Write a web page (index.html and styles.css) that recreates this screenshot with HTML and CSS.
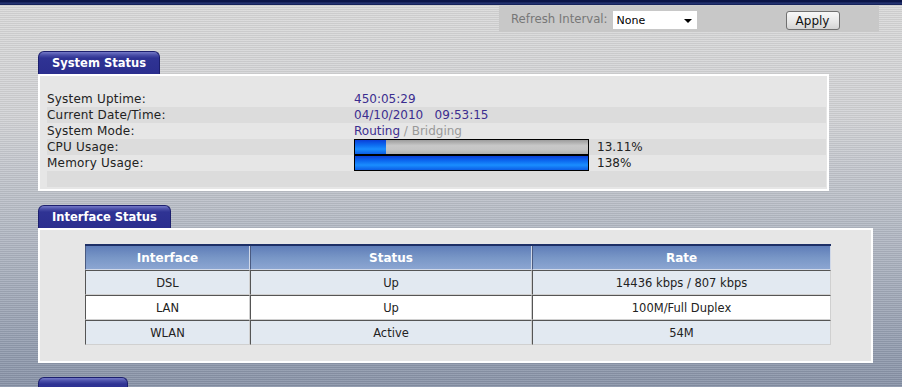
FILE: index.html
```html
<!DOCTYPE html>
<html lang="en">
<head>
    <meta charset="UTF-8">
    <title>Status</title>
    <link rel="stylesheet" href="styles.css">
</head>
<body>
    <div class="topbar"></div>
    <div class="toolbar-row">
        <div class="toolbar">
            <label for="refresh">Refresh Interval:</label>
            <div class="select-wrap">
                <select id="refresh">
                    <option>None</option>
                    <option>5 seconds</option>
                    <option>10 seconds</option>
                </select>
                <span class="arrow"></span>
            </div>
            <button type="button" class="apply">Apply</button>
        </div>
    </div>

    <div class="section">
        <div class="tab">System Status</div>
        <div class="panel system-panel">
            <div class="row">
                <span class="label">System Uptime:</span>
                <span class="value">450:05:29</span>
            </div>
            <div class="row">
                <span class="label">Current Date/Time:</span>
                <span class="value">04/10/2010&nbsp;&nbsp;&nbsp;09:53:15</span>
            </div>
            <div class="row">
                <span class="label">System Mode:</span>
                <span class="value">Routing <span class="muted">/ Bridging</span></span>
            </div>
            <div class="row">
                <span class="label">CPU Usage:</span>
                <span class="bar"><span class="fill" style="width: 13.11%"></span></span>
                <span class="pct">13.11%</span>
            </div>
            <div class="row">
                <span class="label">Memory Usage:</span>
                <span class="bar"><span class="fill" style="width: 100%"></span></span>
                <span class="pct">138%</span>
            </div>
            <div class="row"></div>
        </div>
    </div>

    <div class="section">
        <div class="tab">Interface Status</div>
        <div class="panel iface-panel">
            <table class="iface">
                <thead>
                    <tr>
                        <th class="c1">Interface</th>
                        <th class="c2">Status</th>
                        <th>Rate</th>
                    </tr>
                </thead>
                <tbody>
                    <tr class="alt">
                        <td>DSL</td>
                        <td>Up</td>
                        <td>14436 kbps / 807 kbps</td>
                    </tr>
                    <tr>
                        <td>LAN</td>
                        <td>Up</td>
                        <td>100M/Full Duplex</td>
                    </tr>
                    <tr class="alt">
                        <td>WLAN</td>
                        <td>Active</td>
                        <td>54M</td>
                    </tr>
                </tbody>
            </table>
        </div>
    </div>

    <div class="section">
        <div class="tab tab-short">&nbsp;</div>
    </div>
</body>
</html>
```

FILE: styles.css
```css
body {
    margin: 0;
    height: 387px;
    overflow: hidden;
    font-family: "DejaVu Sans", Verdana, sans-serif;
    font-size: 12px;
    color: #222;
    background:
        repeating-linear-gradient(to bottom, rgba(255,255,255,0.1) 0, rgba(255,255,255,0.1) 1px, rgba(0,0,0,0.06) 1px, rgba(0,0,0,0.06) 2px),
        linear-gradient(to bottom, #dadada 0%, #d2d3d6 30%, #b3b9c4 60%, #8893a8 100%);
}
.topbar {
    height: 5px;
    background: linear-gradient(to bottom, #0b1548 0, #0b1548 2px, #2a3a7a 3px, #0e1a50 5px);
}
.toolbar-row {
    display: flex;
    justify-content: flex-end;
    padding-right: 23px;
    margin-top: 1px;
}
.toolbar {
    width: 380px;
    height: 26px;
    box-sizing: border-box;
    padding: 5px 0 0 12px;
    display: flex;
    align-items: flex-start;
    background: #c8c8c8;
}
.toolbar label {
    color: #777;
    font-size: 11.7px;
    line-height: 17px;
    margin-right: 5px;
}
.select-wrap {
    position: relative;
    width: 84px;
    height: 18px;
}
.select-wrap select {
    appearance: none;
    -webkit-appearance: none;
    width: 84px;
    height: 18px;
    border: none;
    background: #fff;
    font-family: "DejaVu Sans", Verdana, sans-serif;
    font-size: 11px;
    color: #000;
    padding: 0 0 0 4px;
    margin: 0;
}
.select-wrap .arrow {
    position: absolute;
    right: 5px;
    top: 8px;
    border-left: 4px solid transparent;
    border-right: 4px solid transparent;
    border-top: 4px solid #000;
}
.apply {
    margin-left: 89px;
    width: 54px;
    height: 19px;
    padding: 0;
    font-family: "DejaVu Sans", Verdana, sans-serif;
    font-size: 12px;
    color: #111;
    border: 1px solid #707070;
    border-radius: 3px;
    background: linear-gradient(to bottom, #f8f8f8, #e6e6e6 60%, #d4d4d4);
}
.section {
    margin-left: 38px;
}
.section + .section {
    margin-top: 14px;
}
.tab {
    display: inline-block;
    box-sizing: border-box;
    height: 23px;
    padding: 4px 13px 0 13px;
    margin-top: 19px;
    font-weight: bold;
    font-size: 11.5px;
    color: #fff;
    border: 1px solid #1c1f6e;
    border-bottom: none;
    border-radius: 6px 6px 0 0;
    background: linear-gradient(to bottom, #7479c8 0, #4a4fa8 3px, #2f3394 6px, #2b2e8e 100%);
}
.section + .section .tab {
    margin-top: 0;
}
.tab-short {
    width: 90px;
}
.panel {
    border: 2px solid #fff;
    background: #e6e6e6;
}
.system-panel {
    box-sizing: content-box;
    width: 779px;
    padding: 15px 1px 2px 7px;
}
.row {
    display: flex;
    align-items: center;
    height: 16px;
    line-height: 16px;
}
.row:nth-child(even) {
    background: #dcdcdc;
}
.label {
    width: 307px;
    color: #222;
    letter-spacing: 0.2px;
}
.value {
    color: #3b2d8f;
}
.muted {
    color: #999;
}
.bar {
    display: block;
    width: 233px;
    height: 14px;
    border: 1px solid #000;
    background: linear-gradient(to bottom, #9c9c9c, #c8c8c8 40%, #c4c4c4 70%, #b0b0b0);
}
.fill {
    display: block;
    height: 100%;
    background: linear-gradient(to bottom, #0a3fd8 0, #0c6af0 35%, #1a8eff 65%, #0c5ee6 100%);
}
.pct {
    margin-left: 8px;
    color: #222;
}
.iface-panel {
    width: 766px;
    padding: 14px 20px 16px 45px;
}
.iface {
    width: 746px;
    border-collapse: separate;
    border-spacing: 0;
    border-top: 2px solid #1d2f66;
}
.iface th {
    height: 23px;
    padding: 0;
    color: #fff;
    font-weight: bold;
    font-size: 12px;
    background: linear-gradient(to bottom, #5f7db8, #7896c6 50%, #8ca6d2);
    border-left: 1px solid #4a5a80;
    border-right: 1px solid #d0d8e8;
    border-bottom: 1px solid #d0d8e8;
}
.iface th.c1 {
    width: 163px;
}
.iface th.c2 {
    width: 280px;
}
.iface td {
    height: 23px;
    padding: 0;
    text-align: center;
    font-size: 11.5px;
    color: #222;
    background: #fff;
    border-top: 1px solid #555;
    border-left: 1px solid #555;
    border-right: 1px solid #d0d0d0;
    border-bottom: 1px solid #d0d0d0;
}
.iface tr.alt td {
    background: #e2e9f1;
}
```
